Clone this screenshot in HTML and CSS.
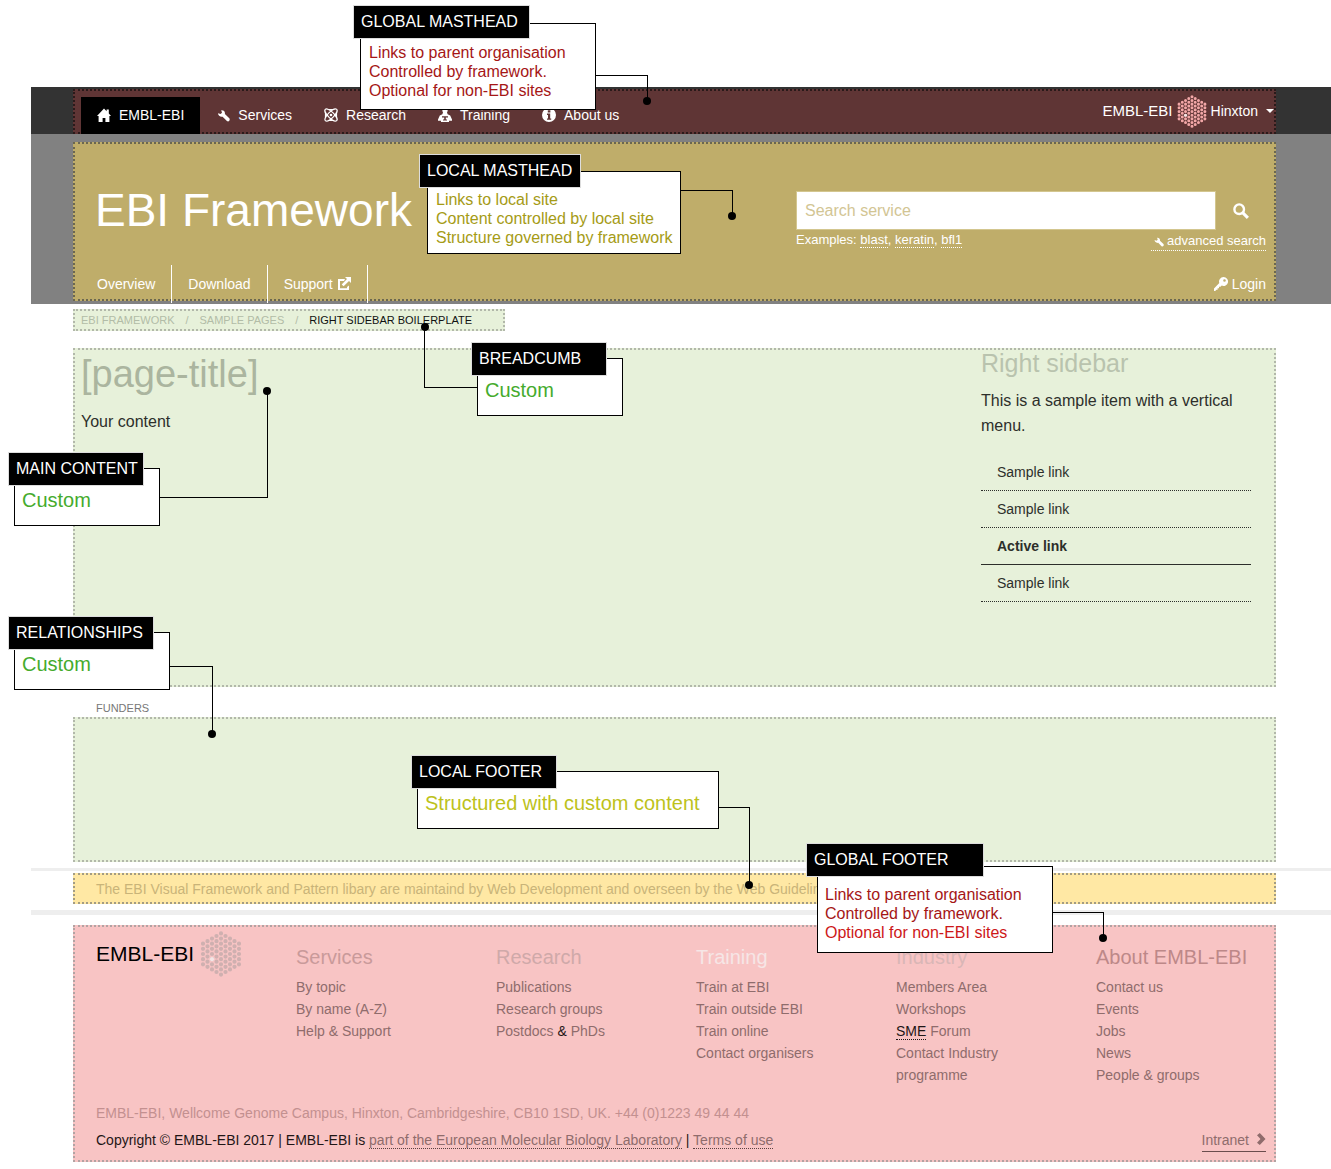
FILE: index.html
```html
<!DOCTYPE html>
<html lang="en">
<head>
<meta charset="utf-8">
<title>EBI Framework: page regions</title>
<link rel="stylesheet" href="styles.css">
</head>
<body>
<svg class="sprite" aria-hidden="true">
  <symbol id="i-home" viewBox="0 0 14 14"><path d="M7 .5 0 8h1.600v6h4v-4h2.800v4h4V8H14l-2.200-2.400V1.600H9.600v1.700z"/></symbol>
  <symbol id="i-wrench" viewBox="0 0 14 14"><path d="M2 5.200 4.600 6 6 4.700 5.200 2.300C7.600 2 9.300 3.700 8.900 6L13.300 10.300C14.500 12 12.800 14.300 10.900 13L6.600 8.700C4.300 9.200 2.200 7.600 2 5.200Z"/></symbol>
  <symbol id="i-atom" viewBox="0 0 14 14"><g fill="none" stroke="currentColor" stroke-width="1.200"><ellipse cx="7" cy="7" rx="8" ry="3" transform="rotate(45 7 7)"/><ellipse cx="7" cy="7" rx="8" ry="3" transform="rotate(-45 7 7)"/><path d="M1.500 4.500v5M12.500 4.500v5M4.500 1.500h5M4.500 12.500h5"/></g><circle cx="7" cy="7" r="1.300"/></symbol>
  <symbol id="i-training" viewBox="0 0 14 14"><path fill-rule="evenodd" d="M7 0a2.600 2.600 0 0 1 2 4.300l.6 2 2.600 1.200L14 11.500v1.200h-3V14H3v-1.300H0v-1.200L1.800 7.500l2.600-1.200.6-2A2.600 2.600 0 0 1 7 0ZM4 8.200v1.200h2.200v2H5v1h4v-1H7.800v-2H10V8.200Z"/></symbol>
  <symbol id="i-info" viewBox="0 0 14 14"><path fill-rule="evenodd" d="M7 0a7 7 0 1 1 0 14A7 7 0 0 1 7 0ZM5.800 2.200v2.200h2.600V2.200ZM5 5.600v1.300h1v3.600H5v1.300h4.200v-1.300h-1V5.600Z"/></symbol>
  <symbol id="i-external" viewBox="0 0 14 14"><path d="M8 2H1v11h11V8.500l-2 1.500v1.200H3V4h4zM8 0h6v6l-2-2-5.400 5.300-1.900-1.900L10 2z"/></symbol>
  <symbol id="i-search" viewBox="0 0 16 16"><path fill="none" stroke="currentColor" stroke-width="2.400" d="M6.200 1.400a4.800 4.800 0 1 1 0 9.600a4.800 4.800 0 0 1 0-9.600Z"/><path fill="none" stroke="currentColor" stroke-width="3" d="m9.600 9.600 5.300 5.300"/></symbol>
  <symbol id="i-key" viewBox="0 0 14 14"><path fill-rule="evenodd" d="M9.500 0a4.500 4.500 0 1 1-1.800 8.600L6.500 9.800H5v1.500H3.600v1.500H2.400L1.200 14H0v-2.500L5.300 6A4.500 4.500 0 0 1 9.500 0ZM10.500 2.200a1.300 1.300 0 1 0 0 2.600 1.300 1.300 0 0 0 0-2.600Z"/></symbol>
  <symbol id="i-chevron" viewBox="0 0 10 14"><path d="M1 3.300 3.800 1 9.500 7l-5.700 6L1 10.700 4.500 7z"/></symbol>
  <symbol id="i-hexagon" viewBox="0 0 42 47">
    <path fill="none" stroke="currentColor" stroke-width="4.300" stroke-linecap="round" stroke-dasharray="0 5.25" d="M2.600 13v21.100M7.200 10.375v26.350M11.800 7.750v31.600M16.400 5.125v36.850M21 2.500v42.100M25.600 5.125v36.850M30.200 7.750v31.600M34.800 10.375v26.350M39.400 13v21.100"/>
    <circle cx="11.800" cy="28.750" r="2.200" fill="#f3e6e6"/>
  </symbol>
</svg>

<div class="page">
  <header>
    <div class="band band-global">
      <div class="region global-masthead">
        <nav class="global-nav" aria-label="EMBL-EBI">
          <a class="active" href="#"><svg><use href="#i-home"/></svg>EMBL-EBI</a>
          <a href="#"><svg><use href="#i-wrench"/></svg>Services</a>
          <a href="#"><svg><use href="#i-atom"/></svg>Research</a>
          <a href="#"><svg><use href="#i-training"/></svg>Training</a>
          <a href="#"><svg><use href="#i-info"/></svg>About us</a>
        </nav>
        <a class="location" href="#"><span class="location-brand">EMBL-EBI</span><svg><use href="#i-hexagon"/></svg>Hinxton<span class="caret"></span></a>
      </div>
    </div>
    <div class="band band-local">
      <div class="region local-masthead">
        <div class="masthead-row">
          <h1>EBI Framework</h1>
          <form class="search">
            <div class="search-row">
              <input type="search" placeholder="Search service" aria-label="Search service">
              <button type="button" aria-label="Search"><svg><use href="#i-search"/></svg></button>
            </div>
            <div class="search-help">
              <span>Examples: <a href="#">blast</a>, <a href="#">keratin</a>, <a href="#">bfl1</a></span>
              <a class="advanced" href="#"><svg><use href="#i-wrench"/></svg>advanced search</a>
            </div>
          </form>
        </div>
        <nav class="local-nav" aria-label="Local">
          <a href="#">Overview</a>
          <a href="#">Download</a>
          <a href="#">Support<svg><use href="#i-external"/></svg></a>
          <a class="login" href="#"><svg><use href="#i-key"/></svg>Login</a>
        </nav>
      </div>
    </div>
  </header>

  <div class="content">
    <nav class="region breadcrumb" aria-label="Breadcrumb">
      <a href="#">EBI Framework</a><i>/</i><a href="#">Sample pages</a><i>/</i><span>Right sidebar boilerplate</span>
    </nav>
    <main class="region main">
      <section>
        <h2>[page-title]</h2>
        <p>Your content</p>
      </section>
      <aside class="sidebar">
        <h3>Right sidebar</h3>
        <p>This is a sample item with a vertical menu.</p>
        <ul>
          <li><a href="#">Sample link</a></li>
          <li><a href="#">Sample link</a></li>
          <li class="current"><a href="#">Active link</a></li>
          <li><a href="#">Sample link</a></li>
        </ul>
      </aside>
    </main>
    <h4 class="funders-title">Funders</h4>
    <section class="region funders"></section>
  </div>

  <footer>
    <div class="band band-local-footer">
      <p class="region local-footer">The EBI Visual Framework and Pattern libary are maintaind by Web Development and overseen by the Web Guidelines</p>
    </div>
    <div class="band band-global-footer">
      <div class="region global-footer">
        <div class="footer-columns">
          <a class="footer-logo" href="#">EMBL-EBI<svg><use href="#i-hexagon"/></svg></a>
          <div class="services"><h4>Services</h4><ul><li><a href="#">By topic</a></li><li><a href="#">By name (A-Z)</a></li><li><a href="#">Help &amp; Support</a></li></ul></div>
          <div class="research"><h4>Research</h4><ul><li><a href="#">Publications</a></li><li><a href="#">Research groups</a></li><li><a href="#">Postdocs <b>&amp;</b> PhDs</a></li></ul></div>
          <div class="training"><h4>Training</h4><ul><li><a href="#">Train at EBI</a></li><li><a href="#">Train outside EBI</a></li><li><a href="#">Train online</a></li><li><a href="#">Contact organisers</a></li></ul></div>
          <div class="industry"><h4>Industry</h4><ul><li><a href="#">Members Area</a></li><li><a href="#">Workshops</a></li><li><a href="#"><abbr>SME</abbr> Forum</a></li><li><a href="#">Contact Industry programme</a></li></ul></div>
          <div class="about"><h4>About EMBL-EBI</h4><ul><li><a href="#">Contact us</a></li><li><a href="#">Events</a></li><li><a href="#">Jobs</a></li><li><a href="#">News</a></li><li><a href="#">People &amp; groups</a></li></ul></div>
        </div>
        <address>EMBL-EBI, Wellcome Genome Campus, Hinxton, Cambridgeshire, CB10 1SD, UK. +44 (0)1223 49 44 44</address>
        <div class="legal">
          <p>Copyright © EMBL-EBI 2017 | EMBL-EBI is <a href="#">part of the European Molecular Biology Laboratory</a> | <a href="#">Terms of use</a></p>
          <a class="intranet" href="#">Intranet<svg><use href="#i-chevron"/></svg></a>
        </div>
      </div>
    </div>
  </footer>

  <div class="callout c-global-masthead"><strong>GLOBAL MASTHEAD</strong><div class="note red">Links to parent organisation<br>Controlled by framework.<br>Optional for non-EBI sites<i class="lead"></i></div></div>
  <div class="callout c-local-masthead"><strong>LOCAL MASTHEAD</strong><div class="note olive">Links to local site<br>Content controlled by local site<br>Structure governed by framework<i class="lead"></i></div></div>
  <div class="callout c-breadcrumb"><strong>BREADCUMB</strong><div class="note short green">Custom<i class="lead up left"></i></div></div>
  <div class="callout c-main"><strong>MAIN CONTENT</strong><div class="note short green">Custom<i class="lead up"></i></div></div>
  <div class="callout c-relationships"><strong>RELATIONSHIPS</strong><div class="note short green">Custom<i class="lead"></i></div></div>
  <div class="callout c-local-footer"><strong>LOCAL FOOTER</strong><div class="note short lime">Structured with custom content<i class="lead"></i></div></div>
  <div class="callout c-global-footer"><strong>GLOBAL FOOTER</strong><div class="note red">Links to parent organisation<br>Controlled by framework.<br><em>Optional for non-EBI sites</em><i class="lead"></i></div></div>
</div>
</body>
</html>
```
FILE: styles.css
```css
* { box-sizing: border-box; }
body {
  margin: 0;
  background: #fff;
  color: #2d2f2b;
  font: 14px/22px "Liberation Sans", Arial, sans-serif;
}
h1, h2, h3, h4, p, ul { margin: 0; padding: 0; font-weight: 400; }
ul { list-style: none; }
a { color: inherit; text-decoration: none; }
svg { width: 14px; height: 14px; fill: currentColor; flex: none; overflow: visible; }
.sprite { position: absolute; width: 0; height: 0; }

.page { position: relative; padding: 87px 0 7px 31px; }
.band { padding: 0 55px 0 42px; }
.region { border: 2px dotted #b2b8aa; }

/* Global masthead */
.band-global { background: #333; padding-top: 2px; }
.global-masthead {
  display: flex;
  justify-content: space-between;
  background: #5f3535;
  border-color: #2a1a1a;
  color: #fff;
  padding: 6px 0 0 6px;
}
.global-nav { display: flex; margin-bottom: -2px; }
.global-nav a { display: flex; align-items: center; gap: 8px; height: 37px; padding: 0 16px 1px; }
.global-nav .active { background: #000; }
.location { display: flex; align-items: center; gap: 4px; height: 28px; }
.location-brand { font-size: 15px; }
.location svg { width: 30px; height: 33px; color: #f2a7a7; }
.caret { margin-left: 4px; border: 4px solid transparent; border-top-color: #fff; border-bottom: 0; }

/* Local masthead */
.band-local { background: #818181; padding-top: 8px; padding-bottom: 3px; }
.local-masthead { background: #bfad6a; border-color: #6b6750; color: #fff; padding: 47px 8px 0 6px; }
.masthead-row { display: flex; justify-content: space-between; align-items: flex-start; padding-left: 14px; }
h1 { font-size: 46px; line-height: 38px; }
.search { width: 470px; }
.search-row { display: flex; }
.search input {
  flex: 1;
  min-width: 0;
  height: 39px;
  padding: 0 8px;
  border: 1px solid #d3c68f;
  border-radius: 0;
  background: #fff;
  font: inherit;
  font-size: 16px;
}
.search input::placeholder { color: #d2c594; opacity: 1; }
.search button { width: 50px; padding: 0; border: 0; background: none; color: #fff; }
.search button svg { width: 16px; height: 16px; display: block; margin: auto; }
.search-help { display: flex; justify-content: space-between; font-size: 13px; line-height: 16px; padding-top: 2px; height: 35px; }
.search-help a { border-bottom: 1px dotted #fff; }
.search-help .advanced { display: flex; align-items: center; gap: 3px; height: 19px; padding-left: 2px; }
.advanced svg { width: 11px; height: 11px; }
.local-nav { display: flex; margin-bottom: -4px; }
.local-nav a { display: flex; align-items: center; gap: 4px; height: 38px; padding: 0 16px; border-right: 1px solid #fff; }
.local-nav .login { margin-left: auto; padding: 0; border: 0; }

/* Content */
.content { padding: 5px 55px 0 42px; }
.content .region { background: #e7f1da; }
.breadcrumb {
  display: flex;
  width: 432px;
  padding: 0 6px;
  font-size: 11px;
  line-height: 18px;
  text-transform: uppercase;
  color: #b2bca7;
}
.breadcrumb i { width: 25px; text-align: center; font-style: normal; }
.breadcrumb span { color: #111; }
.main {
  display: grid;
  grid-template-columns: minmax(0, 1fr) 270px;
  margin-top: 17px;
  min-height: 339px;
  padding: 0 23px 0 6px;
}
h2 { font-size: 38px; line-height: 48px; color: #abb59f; }
.main section p { padding-top: 11px; font-size: 16px; line-height: 25px; }
h3 { font-size: 25px; line-height: 26px; color: #b9c3ae; }
.sidebar p { padding: 12px 0 16px; font-size: 16px; line-height: 25px; }
.sidebar li { height: 37px; padding-left: 16px; line-height: 36px; border-bottom: 1px dotted #2d2f2b; }
.sidebar .current { font-weight: 700; border-bottom-style: solid; }
.funders-title { padding: 12px 23px 0; font-size: 11px; line-height: 18px; text-transform: uppercase; color: #777; }
.funders { min-height: 145px; margin-bottom: 6px; }

/* Local footer */
.band-local-footer { padding-top: 2px; padding-bottom: 6px; border-top: 3px solid #eee; border-bottom: 5px solid #eee; }
.local-footer {
  background: #ffe8a4;
  border-color: #a39c83;
  color: #c9b479;
  padding: 3px 21px 2px;
  white-space: nowrap;
  overflow: hidden;
  line-height: 22px;
}

/* Global footer */
.band-global-footer { padding-top: 10px; }
.global-footer { background: #f8c4c4; border-color: #b3a3a3; padding: 4px 8px 8px 21px; color: #8f6c6c; }
.footer-columns { display: grid; grid-template-columns: repeat(5, 20fr) 17fr; min-height: 169px; }
.footer-logo { display: flex; align-items: center; gap: 6px; height: 46px; color: #000; font-size: 21px; }
.footer-logo svg { width: 42px; height: 46px; color: #cfb0b0; }
.footer-columns h4 { padding-top: 14px; margin-bottom: 7px; font-size: 20px; line-height: 24px; white-space: nowrap; }
.footer-columns ul { padding-right: 40px; }
.footer-columns b { font-weight: 400; color: #1f1616; }
.footer-columns abbr { color: #1f1616; border-bottom: 1px dotted #1f1616; }
.services h4 { color: #c99a9a; }
.research h4 { color: #cfa9a9; }
.training h4 { color: #f6e6e6; }
.industry h4 { color: #d9b6b6; }
.about h4 { color: #bd8888; }
address { font-style: normal; line-height: 26px; color: #c39090; }
.legal { display: flex; justify-content: space-between; line-height: 16px; padding-top: 6px; color: #1f1616; }
.legal a { color: #8f6c6c; border-bottom: 1px dotted #5a4040; }
.legal .intranet { display: flex; align-items: flex-start; gap: 7px; height: 20px; border-bottom: 1px solid #6b4d4d; }
.intranet svg { width: 10px; }

/* Annotations laid over the page */
.callout { position: absolute; }
.callout strong {
  position: relative;
  z-index: 1;
  display: block;
  height: 32px;
  padding: 0 7px;
  background: #000;
  color: #fff;
  outline: 1px solid #ddd;
  font-size: 16px;
  font-weight: 400;
  line-height: 32px;
  white-space: nowrap;
}
.note {
  position: relative;
  margin: -16px 0 0 7px;
  padding: 19px 8px 9px;
  border: 1px solid #000;
  background: #fff;
  font-size: 16px;
  line-height: 19px;
  white-space: nowrap;
}
.note.short { margin: -17px 0 0 5px; padding: 19px 7px 12px; font-size: 20px; line-height: 25px; }
.note em { font-style: normal; color: #cd1719; }
.red { color: #a51616; }
.olive { color: #a59b16; }
.green { color: #45ab2d; }
.lime { color: #bdc21b; }
.lead { position: absolute; left: 100%; border: solid #000; border-width: 1px 1px 0 0; }
.lead::after { content: ""; position: absolute; right: -4px; bottom: -4px; width: 8px; height: 8px; border-radius: 50%; background: #000; }
.lead.up { border-width: 0 1px 1px 0; }
.lead.up::after { bottom: auto; top: -4px; }
.lead.left { left: auto; right: 100%; border-width: 0 0 1px 1px; }
.lead.left::after { right: auto; left: -4px; }

.c-global-masthead { left: 354px; top: 6px; }
.c-global-masthead strong { width: 175px; }
.c-global-masthead .note { width: 236px; margin-left: 6px; padding-bottom: 9px; margin-top: -15px; }
.c-global-masthead .lead { top: 51px; width: 53px; height: 26px; }

.c-local-masthead { left: 420px; top: 155px; }
.c-local-masthead strong { width: 160px; }
.c-local-masthead .note { width: 254px; padding-top: 18px; padding-bottom: 6px; }
.c-local-masthead .lead { top: 18px; width: 53px; height: 26px; }

.c-breadcrumb { left: 472px; top: 343px; }
.c-breadcrumb strong { width: 134px; }
.c-breadcrumb .note { width: 146px; }
.c-breadcrumb .lead { bottom: 27px; width: 54px; height: 61px; }

.c-main { left: 9px; top: 453px; }
.c-main strong { width: 134px; }
.c-main .note { width: 146px; }
.c-main .lead { bottom: 27px; width: 109px; height: 107px; }

.c-relationships { left: 9px; top: 617px; }
.c-relationships strong { width: 144px; }
.c-relationships .note { width: 156px; }
.c-relationships .lead { top: 33px; width: 44px; height: 68px; }

.c-local-footer { left: 412px; top: 756px; }
.c-local-footer strong { width: 144px; }
.c-local-footer .note { width: 302px; }
.c-local-footer .lead { top: 35px; width: 32px; height: 78px; }

.c-global-footer { left: 807px; top: 844px; }
.c-global-footer strong { width: 176px; }
.c-global-footer .note { width: 236px; margin-top: -10px; margin-left: 10px; padding: 18px 7px 10px; }
.c-global-footer .lead { top: 45px; width: 52px; height: 26px; }
```
